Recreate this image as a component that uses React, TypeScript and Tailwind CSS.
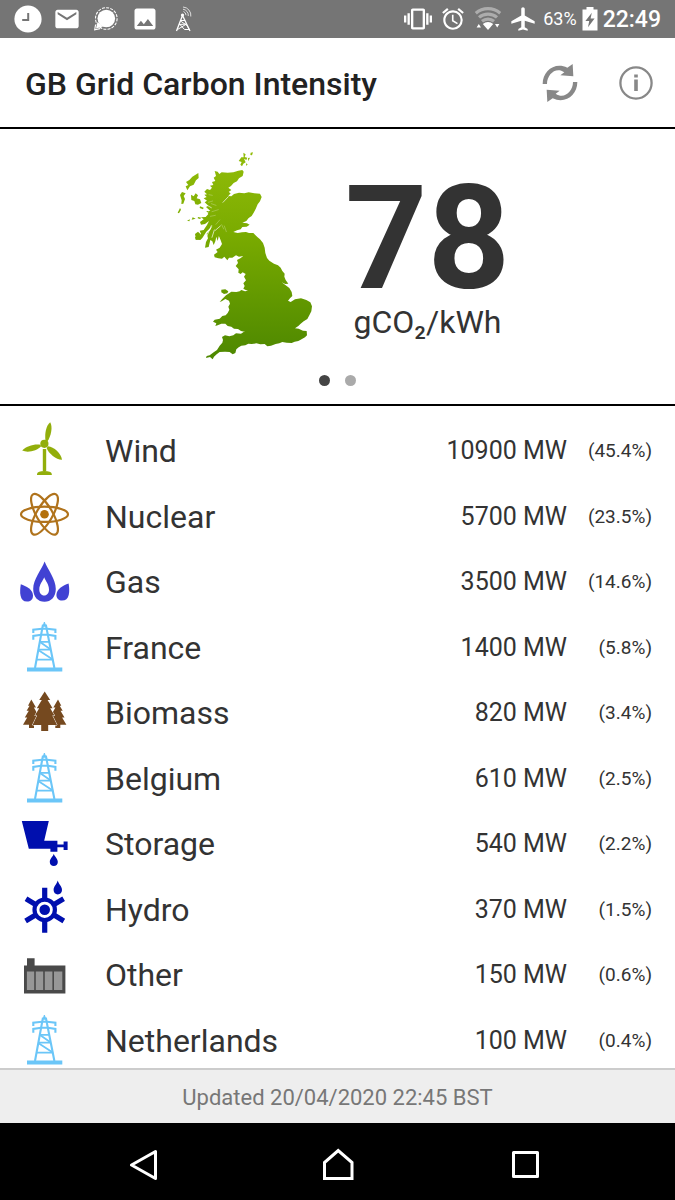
import React from 'react';
import { MdAirplanemodeActive, MdAlarm, MdImage, MdMail, MdVibration } from 'react-icons/md';

interface Source {
  name: string;
  megawatts: number;
  share: string;
  icon: React.ReactNode;
}

function SourceIcon({ children }: { children: React.ReactNode }) {
  return (
    <svg viewBox="0 0 54 54" className="h-[54px] w-[54px] overflow-visible" aria-hidden="true">
      {children}
    </svg>
  );
}

function WindIcon() {
  return (
    <SourceIcon>
      <g fill="#92ae0b">
        <path d="M28.5 16.5C27.5 10 29 1.5 33.2 -1.8C36 3 34 12 30.5 17.3Z" />
        <path d="M23.5 20.8C18 19.5 9 22 5.2 26.5C11 29.3 20 26.5 24 22.5Z" />
        <path d="M31 22.2C37 23 44 29 45 35.8C39.5 36 31.5 29.5 29.6 24Z" />
        <circle cx="27.4" cy="19.8" r="4.1" />
        <path d="M25.8 25h3.4v22h-3.4z" />
        <path d="M20 51V50C20.5 47.8 23 47 27.4 47S34.3 47.8 34.8 50V51Z" />
      </g>
    </SourceIcon>
  );
}

function NuclearIcon() {
  return (
    <SourceIcon>
      <g fill="none" stroke="#b0731c" strokeWidth="2.2">
        <ellipse cx="27.5" cy="24.3" rx="23.5" ry="7.6" />
        <ellipse cx="27.5" cy="24.3" rx="23" ry="8" transform="rotate(60 27.5 24.3)" />
        <ellipse cx="27.5" cy="24.3" rx="23" ry="8" transform="rotate(-60 27.5 24.3)" />
      </g>
      <circle cx="27.5" cy="24.3" r="4.3" fill="#b3700b" />
    </SourceIcon>
  );
}

function GasIcon() {
  return (
    <SourceIcon>
      <g fill="#4142d3">
        <path
          fillRule="evenodd"
          d="M27.6 6.5C31 15 38.8 24 38.8 34C38.8 42 34 46.8 27.5 46.8S16.2 42 16.2 34C16.2 24 24.5 15 27.6 6.5ZM27.2 22.3C25.8 26 22.3 29.5 22.3 34.4C22.3 38 24.3 40.4 27.2 40.4S32 38 32 34.4C32 29.5 28.6 26 27.2 22.3Z"
        />
        <path d="M3.8 29.2C9 31 16 34.5 16 40.5C16 44.5 13.5 46.6 10 46.6C2.5 46.6 2.5 37 3.8 29.2Z" />
        <path d="M51.6 28.4C46 30.5 39.4 34 39.4 40C39.4 43.5 41.8 45.6 45 45.6C52.5 45.6 53 36.5 51.6 28.4Z" />
      </g>
    </SourceIcon>
  );
}

function PylonIcon() {
  return (
    <SourceIcon>
      <g fill="none" stroke="#6bc6f8" strokeWidth="2.1">
        <path d="M18 47L25.8 4.5H29L37.4 47" />
        <path d="M16.3 12V8.6L25 7.8H30L38.4 8.6V12" />
        <path d="M16.3 18.8V15L24 13.8H31L38.4 15V18.8" />
        <path d="M22.6 20.8H32.4M21.5 28.6H34M19.5 38.6H36.2" strokeWidth="1.8" />
        <path d="M23 21L33.4 28.2M21.6 29.2L35.4 38.2" strokeWidth="1.8" />
      </g>
      <path d="M26.2 5L27.4 1L28.6 5Z" fill="#6bc6f8" stroke="#6bc6f8" />
      <path d="M10 46.6h35.3v3.8H10z" fill="#6bc6f8" />
    </SourceIcon>
  );
}

function BiomassIcon() {
  return (
    <SourceIcon>
      <g fill="#75491f">
        <path d="M14.3 13.6L19 21.6H16.9L20.6 28.3H18.5L22.3 38.8H17V42H12V38.8H6L10.2 31.5H7.8L11.8 24.8H9.6L12.6 19.8H11Z" />
        <path d="M41 13.6L36.3 21.6H38.4L34.7 28.3H36.8L33 38.8H38.3V42H43.3V38.8H49.4L45.1 31.5H47.5L43.5 24.8H45.7L42.7 19.8H44.3Z" />
        <path
          d="M27.7 5.6L33.2 14H30.6L35.6 22.3H33.2L37.5 29.5H35.3L40 39H31.2V45H24.2V39H15.6L20.1 29.5H17.9L22.2 22.3H19.8L24.8 14H22.2Z"
          stroke="#fff"
          strokeWidth="1"
          paintOrder="stroke"
        />
      </g>
    </SourceIcon>
  );
}

function StorageIcon() {
  return (
    <SourceIcon>
      <g fill="#000fae">
        <path d="M4.8 3.9H31.8L27.2 23.8H40.4V27.4H46.6V24.4H50.6V33H46.6V30.2H40.4V34.8H33.4V31.8H11.8Z" />
        <path d="M36.8 36.8C37.8 40 40.8 41.6 40.8 45C40.8 47.5 39 49 36.8 49S32.8 47.5 32.8 45C32.8 41.6 35.8 40 36.8 36.8Z" />
      </g>
    </SourceIcon>
  );
}

function HydroIcon() {
  return (
    <SourceIcon>
      <g stroke="#000fae" strokeWidth="5.2" fill="none">
        <path d="M27.7 4.7V16M27.7 38V49.8M9 15.8L18.5 21.5M46.6 15.8L37 21.5M8.6 37.9L18.5 32M46.8 37.9L37 32" />
        <circle cx="27.7" cy="26.8" r="10.2" strokeWidth="4.2" />
      </g>
      <circle cx="27.7" cy="26.8" r="5.3" fill="#000fae" />
      <path
        d="M40.7 -2.4C41.7 1.5 45 3.2 45 7C45 9.8 43.2 11.4 40.8 11.4S36.6 9.8 36.6 7C36.6 3.2 39.8 1.5 40.7 -2.4Z"
        fill="#000fae"
      />
    </SourceIcon>
  );
}

function OtherIcon() {
  return (
    <SourceIcon>
      <path d="M10 10.2H17.6V17.4H48.4V45.6H7V17.4H10Z" fill="#494949" />
      <path d="M9.9 23.6H17.2V42H9.9zM18.8 23.6H26.2V42H18.8zM27.8 23.6H35.4V42H27.8zM37 23.6H45.3V42H37z" fill="#979797" />
    </SourceIcon>
  );
}

const sources: Source[] = [
  { name: 'Wind', megawatts: 10900, share: '45.4', icon: <WindIcon /> },
  { name: 'Nuclear', megawatts: 5700, share: '23.5', icon: <NuclearIcon /> },
  { name: 'Gas', megawatts: 3500, share: '14.6', icon: <GasIcon /> },
  { name: 'France', megawatts: 1400, share: '5.8', icon: <PylonIcon /> },
  { name: 'Biomass', megawatts: 820, share: '3.4', icon: <BiomassIcon /> },
  { name: 'Belgium', megawatts: 610, share: '2.5', icon: <PylonIcon /> },
  { name: 'Storage', megawatts: 540, share: '2.2', icon: <StorageIcon /> },
  { name: 'Hydro', megawatts: 370, share: '1.5', icon: <HydroIcon /> },
  { name: 'Other', megawatts: 150, share: '0.6', icon: <OtherIcon /> },
  { name: 'Netherlands', megawatts: 100, share: '0.4', icon: <PylonIcon /> },
];

function StatusSlot({ children }: { children: React.ReactNode }) {
  return <span className="flex w-[30px] shrink-0 items-center justify-center">{children}</span>;
}

function StatusBar() {
  return (
    <div className="flex h-[38px] items-center justify-between bg-[#757575] pr-[14px] pl-[13px] text-white">
      {/* Notifications */}
      <div className="flex items-center gap-[9px]">
        <StatusSlot>
          <svg viewBox="0 0 28 28" className="h-7 w-7">
            <circle cx="14" cy="14" r="13.6" fill="currentColor" />
            <path d="M14.2 8V15H8.2" fill="none" stroke="#757575" strokeWidth="2" />
          </svg>
        </StatusSlot>
        <StatusSlot>
          <MdMail className="h-7 w-7" />
        </StatusSlot>
        <StatusSlot>
          <svg viewBox="0 0 24 24" className="h-6 w-6">
            <circle cx="12.3" cy="11.5" r="8.8" fill="currentColor" />
            <path d="M3.5 15L2 21.5L9 19.5Z" fill="currentColor" />
            <circle cx="12.3" cy="11.5" r="10.8" fill="none" stroke="currentColor" strokeWidth="1.1" strokeDasharray="3 1.2" />
            <path d="M1.6 17.5L0.7 22.8L6 21.6" fill="none" stroke="currentColor" strokeWidth="1.1" />
          </svg>
        </StatusSlot>
        <StatusSlot>
          <MdImage className="h-7 w-7" />
        </StatusSlot>
        <StatusSlot>
          <svg viewBox="0 0 18 26" className="h-[26px] w-[18px]" fill="none" stroke="currentColor" strokeWidth="1.3">
            <path d="M1.5 25L7.5 9.5L15 25" />
            <path d="M5.5 14.5H10M4.2 18.5L11.8 18M2.5 23.5L11.5 18M5.5 15L12 19.5L14.5 24M4.5 18L9.5 23.5H14" strokeWidth="1" />
            <circle cx="7.5" cy="9" r="1.6" fill="currentColor" stroke="none" />
            <path d="M8.5 5.5A4 4 0 0 1 11 9.2M8 3.2A6.2 6.2 0 0 1 13.3 10M8 1A8.4 8.4 0 0 1 15.8 10.5" strokeWidth="1" opacity="0.75" />
          </svg>
        </StatusSlot>
      </div>

      {/* System state */}
      <div className="flex items-center gap-[5px]">
        <StatusSlot>
          <MdVibration className="h-7 w-7" />
        </StatusSlot>
        <StatusSlot>
          <MdAlarm className="h-[26px] w-[26px]" />
        </StatusSlot>
        <StatusSlot>
          <svg viewBox="0 0 28 24" className="h-6 w-7">
            <g fill="none" stroke="#fff" strokeOpacity="0.4" strokeWidth="3.2">
              <path d="M1.8 6.2A18.5 18.5 0 0 1 26.2 6.2" />
              <path d="M5 10.4A13.8 13.8 0 0 1 23 10.4" />
              <path d="M8 14.3A9.4 9.4 0 0 1 20 14.3" />
            </g>
            <path d="M14 23L8.8 17A8 8 0 0 1 19.2 17Z" fill="currentColor" />
            <path d="M4.8 17L7 20.6H2.6ZM23.2 20.6L25.4 17H21Z" fill="currentColor" />
          </svg>
        </StatusSlot>
        <StatusSlot>
          <MdAirplanemodeActive className="h-7 w-7" />
        </StatusSlot>
        <span className="text-[18px] leading-6">63%</span>
        <svg viewBox="0 0 16 24" className="h-6 w-4">
          <path
            fillRule="evenodd"
            d="M4.5 0H11.5V2.6H15.5V23.5H0.5V2.6H4.5ZM9.8 5.8L3.4 14H7.2L6 20.2L12.6 11.6H8.6Z"
            fill="currentColor"
          />
        </svg>
        <span className="pt-0.5 text-[23px] leading-6 font-medium">22:49</span>
      </div>
    </div>
  );
}

function BritainMap() {
  return (
    <svg viewBox="0 0 510 690" className="h-[230px] w-[170px]" role="img" aria-label="Map of Great Britain">
      <defs>
        <linearGradient id="land" x1="0" y1="30" x2="0" y2="660" gradientUnits="userSpaceOnUse">
          <stop offset="0" stopColor="#93bd0a" />
          <stop offset="0.4" stopColor="#7aab00" />
          <stop offset="0.75" stopColor="#5f9600" />
          <stop offset="1" stopColor="#4d8700" />
        </linearGradient>
      </defs>
      <g fill="url(#land)">
        {/* Mainland */}
        <path d="M149 93L158 95L163 102L170 97L188 98L205 97L220 92L232 90L236 95L233 108L222 115L216 124L206 129L198 138L190 143L199 150L191 156L197 160L190 168L199 169L207 162L222 158L238 160L251 157L268 160L285 161L290 171L285 184L278 193L272 207L266 218L260 228L251 234L244 243L232 248L246 250L254 254L245 260L232 261L227 268L216 271L205 276L218 279L231 277L243 276L252 279L265 279L277 291L285 298L294 309L299 323L301 339L306 354L313 362L327 371L339 376L347 383L352 393L359 401L358 410L362 420L370 431L361 432L350 427L365 438L373 444L380 456L382 468L375 475L369 482L377 486L390 478L408 475L424 480L436 487L441 499L439 514L433 526L427 537L416 544L407 551L400 558L390 565L401 566L414 572L425 573L426 586L420 592L407 599L400 603L389 605L380 609L365 608L352 606L343 610L332 612L318 617L307 619L299 612L286 613L274 610L260 612L250 611L241 616L229 617L221 622L214 628L211 639L203 643L194 636L180 635L164 636L155 643L147 650L143 658L135 651L123 654L125 648L134 646L146 637L156 630L164 617L172 608L174 600L171 591L180 586L193 589L205 586L213 580L228 581L239 574L249 566L257 557L266 548L258 560L249 570L241 576L228 573L219 567L207 566L199 560L188 558L181 551L169 551L158 556L151 558L154 550L144 545L149 539L164 536L172 528L182 526L188 519L193 509L190 500L195 491L192 482L181 477L170 484L164 486L171 478L183 466L190 461L199 455L214 456L224 454L229 450L240 454L249 452L242 450L235 446L239 438L235 430L243 421L237 410L242 402L233 397L227 402L220 398L221 388L212 378L219 369L216 360L226 355L235 348L222 350L213 346L202 353L192 353L187 361L178 350L171 356L160 355L149 352L147 344L158 336L153 329L164 323L171 312L167 301L163 291L158 281L165 268L162 286L158 303L154 290L151 304L146 315L142 304L136 300L131 321L120 323L123 306L129 295L125 281L136 269L143 256L136 264L124 275L112 294L106 300L92 299L90 292L101 288L108 281L104 272L116 270L126 255L132 243L120 252L108 254L105 246L116 238L108 232L122 231L130 222L124 213L136 213L123 201L130 197L119 187L126 182L116 175L125 171L118 164L126 163L118 155L126 147L135 150L141 143L135 137L145 135L141 126L151 123L146 113L153 108Z" />
        {/* Anglesey */}
        <path d="M169 449L181 448L190 454L187 460L177 462L169 457Z" />
        {/* Hebrides and Skye */}
        <path d="M100 99L101 114L93 121L86 134L75 139L67 151L62 139L70 135L63 126L73 120L82 110Z" />
        <path d="M51 156L62 160L56 168L60 177L55 191L49 192L50 181L45 165ZM45 204L48 209L42 220L38 218Z" />
        <path d="M78 164L86 169L92 160L99 166L95 175L105 178L109 189L99 194L91 193L88 183L79 180Z" />
        <path d="M105 199L116 203L114 208L104 204ZM83 232L92 236L80 239ZM66 242L75 238L73 244ZM99 231L109 233L105 237L98 235Z" />
        <path d="M90 282L99 275L106 282L101 297L93 299Z" />
        {/* Northern Isles */}
        <path d="M235 38L242 43L239 51L247 53L244 60L237 56L242 67L235 71L231 79L226 74L230 66L221 63L229 52L236 52ZM257 38L264 37L261 46L256 45ZM249 54L255 53L250 64ZM243 70L248 73L244 78Z" />
      </g>
      {/* Sea lochs */}
      <g stroke="#fff" fill="none" strokeLinecap="round">
        <path d="M190 170L174 187M151 271L166 258M139 257L124 292M148 270L141 292M118 222L130 216M128 197L139 203" strokeWidth="2" />
        <path d="M142 166L132 164M143 183L130 187M153 196L139 191M160 209L141 215M151 226L136 229M176 267L170 254M184 275L178 258M164 240L153 253" strokeWidth="1.5" opacity="0.5" />
      </g>
    </svg>
  );
}

function Header() {
  return (
    <header className="flex items-center justify-between border-b-2 border-black py-[20px] pr-[15px] pl-[25px]">
      <h1 className="pt-0.5 text-[32px] leading-9 font-medium text-[#222]">GB Grid Carbon Intensity</h1>
      <div className="flex items-center gap-[28px]">
        <button type="button" aria-label="Refresh" className="flex h-[49px] w-12 items-center justify-center">
          <svg viewBox="0 0 120 120" className="h-10 w-10" fill="#888">
            <path d="M8 63C8 24 44 -4 82 14L98 3L100 40L61 37L73 28C48 10 21 34 21 63Z" />
            <path d="M112 57C112 96 76 124 38 106L22 117L20 80L59 83L47 92C72 110 99 86 99 57Z" />
          </svg>
        </button>
        <button type="button" aria-label="Information" className="flex h-[49px] w-12 items-center justify-center">
          <svg viewBox="0 0 36 36" className="h-9 w-9" fill="none" stroke="#888">
            <circle cx="18" cy="18" r="15.6" strokeWidth="2.3" />
            <path d="M18 9.4V12.6M18 14.4V26" strokeWidth="3.6" />
          </svg>
        </button>
      </div>
    </header>
  );
}

function IntensitySummary() {
  return (
    <section className="border-b-2 border-black pt-[11px] pb-[18px]">
      <div className="flex items-center justify-center gap-[10px]">
        <BritainMap />
        <div className="pt-1 text-center text-[#333]">
          <p className="text-[144px] leading-[130px] font-bold">78</p>
          <p className="text-[32px] leading-9">gCO₂/kWh</p>
        </div>
      </div>
      <div className="mt-[5px] flex justify-center gap-[15px]">
        <button type="button" aria-label="Current intensity" className="h-[11px] w-[11px] rounded-full bg-[#444]" />
        <button type="button" aria-label="Intensity history" className="h-[11px] w-[11px] rounded-full bg-[#aaa]" />
      </div>
    </section>
  );
}

function SourceRow({ source }: { source: Source }) {
  return (
    <tr className="flex items-center">
      <td>{source.icon}</td>
      <th scope="row" className="flex-1 pl-[34px] text-left text-[32px] leading-9 font-normal">
        {source.name}
      </th>
      <td className="text-right text-[25px] leading-9">{source.megawatts} MW</td>
      <td className="w-[85px] text-right text-[19px] leading-9">({source.share}%)</td>
    </tr>
  );
}

function NavBar() {
  return (
    <nav className="flex h-[77px] items-center justify-center gap-[132px] bg-black pt-1.5">
      <button type="button" aria-label="Back" className="flex h-14 w-14 items-center justify-center">
        <svg viewBox="0 0 40 40" className="h-10 w-10" fill="none" stroke="#fff" strokeWidth="3" strokeLinejoin="round">
          <path d="M1.5 20L25.5 6.5V33.5Z" />
        </svg>
      </button>
      <button type="button" aria-label="Home" className="flex h-14 w-14 items-center justify-center">
        <svg viewBox="0 0 40 40" className="h-10 w-10" fill="none" stroke="#fff" strokeWidth="3">
          <path d="M6.5 33.5V17.5L20.2 5.5L34 17.5V33.5Z" />
        </svg>
      </button>
      <button type="button" aria-label="Recent apps" className="flex h-14 w-14 items-center justify-center">
        <svg viewBox="0 0 40 40" className="h-10 w-10" fill="none" stroke="#fff" strokeWidth="3" strokeLinejoin="round">
          <path d="M7.5 7.5H31.5V31.5H7.5Z" />
        </svg>
      </button>
    </nav>
  );
}

export default function App() {
  return (
    <div className="flex min-h-screen flex-col bg-white font-[Roboto,sans-serif]">
      <StatusBar />
      <Header />
      <IntensitySummary />

      <table className="flex flex-1 flex-col pt-[18px] pr-[23px] pl-[17px] text-[#333]">
        <tbody className="flex flex-1 flex-col justify-between">
          {sources.map((source) => (
            <SourceRow key={source.name} source={source} />
          ))}
        </tbody>
      </table>

      <footer className="border-t-2 border-[#ccc] bg-[#eee] pt-[12px] pb-[9px] text-center text-[22px] leading-8 text-[#777]">
        Updated 20/04/2020 22:45 BST
      </footer>
      <NavBar />
    </div>
  );
}
